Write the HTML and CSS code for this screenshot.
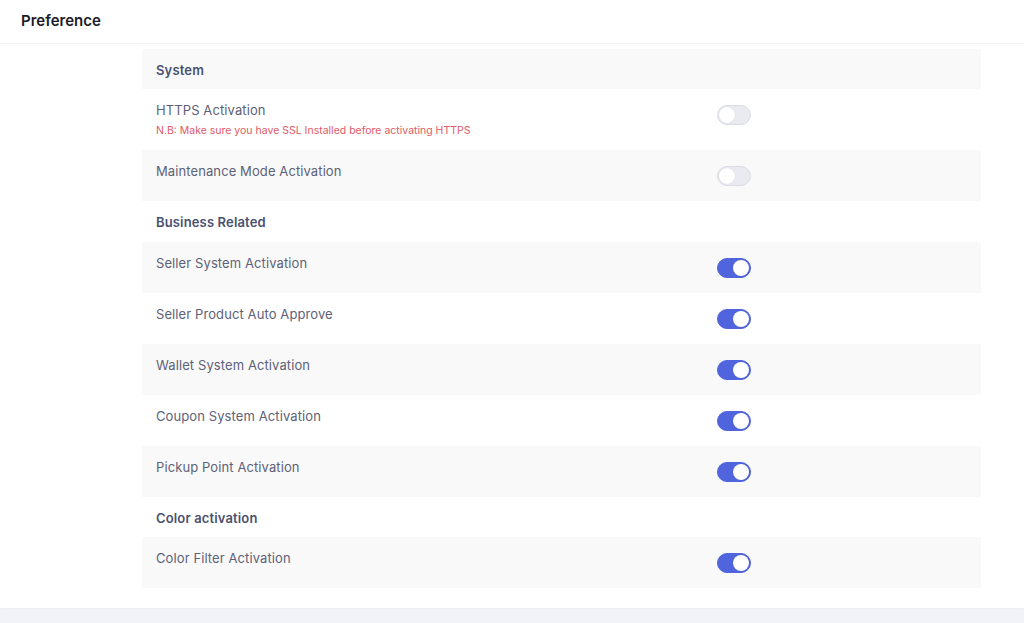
FILE: index.html
```html
<!DOCTYPE html>
<html>
<head>
<meta charset="utf-8">
<link rel="stylesheet" href="styles.css">
</head>
<body>
<div class="card">
  <div class="card-header"><h5>Preference</h5></div>
  <div class="card-body">
    <div class="table">
      <div class="row head striped"><div class="cell">System</div></div>
      <div class="row">
        <div class="cell label">HTTPS Activation<div class="note">N.B: Make sure you have SSL Installed before activating HTTPS</div></div>
        <div class="cell"><span class="switch"></span></div>
      </div>
      <div class="row striped">
        <div class="cell label">Maintenance Mode Activation</div>
        <div class="cell"><span class="switch"></span></div>
      </div>
      <div class="row head business"><div class="cell">Business Related</div></div>
      <div class="row striped">
        <div class="cell label">Seller System Activation</div>
        <div class="cell"><span class="switch on"></span></div>
      </div>
      <div class="row">
        <div class="cell label">Seller Product Auto Approve</div>
        <div class="cell"><span class="switch on"></span></div>
      </div>
      <div class="row striped">
        <div class="cell label">Wallet System Activation</div>
        <div class="cell"><span class="switch on"></span></div>
      </div>
      <div class="row">
        <div class="cell label">Coupon System Activation</div>
        <div class="cell"><span class="switch on"></span></div>
      </div>
      <div class="row striped">
        <div class="cell label">Pickup Point Activation</div>
        <div class="cell"><span class="switch on"></span></div>
      </div>
      <div class="row head"><div class="cell">Color activation</div></div>
      <div class="row striped">
        <div class="cell label">Color Filter Activation</div>
        <div class="cell"><span class="switch on"></span></div>
      </div>
    </div>
  </div>
</div>
</body>
</html>
```
FILE: styles.css
```css
* { box-sizing: border-box; }
html, body { margin: 0; padding: 0; }
body {
  background: #f2f3f8;
  font-family: Inter, "Noto Sans", sans-serif;
  height: 623px;
  overflow: hidden;
}
.card {
  background: #fff;
  height: 608px;
  box-shadow: 0 1px 2px rgba(0,0,0,0.03);
}
.card-header {
  height: 44px;
  border-bottom: 1px solid #f1f1f4;
  padding: 0 21px;
  display: flex;
  align-items: center;
}
.card-header h5 {
  margin: 0 0 2px 0;
  font-size: 15px;
  font-weight: 600;
  color: #1b1b28;
}
.card-body {
  padding: 5px 43px 0 142px;
}
.row {
  display: grid;
  grid-template-columns: 561px 1fr;
}
.row.striped { background: #f9f9f9; }
.cell {
  padding: 12px 14px;
  font-size: 13px;
  line-height: 20px;
}
.cell.label {
  padding: 11px 14px 13px;
  color: #5d6178;
  letter-spacing: 0.1px;
}
.head .cell {
  padding: 11px 14px 9px;
  font-weight: 600;
  color: #4a5170;
  line-height: 20px;
  letter-spacing: 0.15px;
}
.head.business .cell { padding-bottom: 10px; }
.note {
  color: #e25a66;
  font-size: 10.5px;
  line-height: 12px;
  letter-spacing: 0;
  margin-top: 5px;
}
.switch {
  display: block;
  width: 34px;
  height: 20px;
  margin-top: 4px;
  margin-bottom: 3px;
  border-radius: 10px;
  background: #e9ebf0;
  border: 1px solid #d9dce3;
  position: relative;
}
.switch::after {
  content: "";
  position: absolute;
  top: 1px;
  left: 1px;
  width: 16px;
  height: 16px;
  border-radius: 50%;
  background: #fff;
  box-shadow: 0 0 1px rgba(0,0,0,0.15);
}
.switch.on {
  background: #4f64dd;
  border-color: #4f64dd;
}
.switch.on::after { left: 15px; }
```
